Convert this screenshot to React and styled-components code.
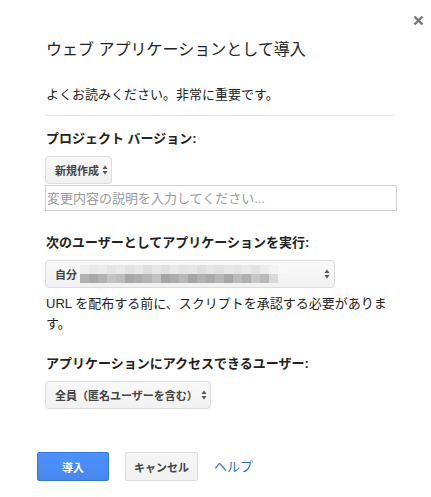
import React from "react";
import styled, { createGlobalStyle } from "styled-components";

const GlobalStyle = createGlobalStyle`
  body {
    margin: 0;
    background: #fff;
    font-family: "Liberation Sans", "Noto Sans CJK JP", sans-serif;
    color: #222;
  }
`;

const Dialog = styled.div`
  position: relative;
  width: 431px;
  height: 497px;
  box-sizing: border-box;
  padding: 40px 34px 0 45px;
  display: flex;
  flex-direction: column;
`;

const Close = styled.button`
  position: absolute;
  top: 14px;
  right: 7px;
  width: 12px;
  height: 12px;
  padding: 0;
  border: 0;
  background: none;
  display: flex;
  align-items: center;
  justify-content: center;
  cursor: pointer;
`;

const Title = styled.h1`
  margin: 0 0 0 1px;
  font-size: 16px;
  line-height: 20px;
  font-weight: normal;
  color: #222;
`;

const Text = styled.p`
  margin: ${(p) => p.$margin || "0"};
  margin-left: 1px;
  font-size: 13px;
  line-height: ${(p) => p.$lh || "18px"};
  color: #222;
  width: ${(p) => p.$width || "auto"};
`;

const Divider = styled.hr`
  margin: 11px 3px 0 0;
  border: 0;
  border-top: 1px solid #e5e5e5;
  height: 0;
`;

const Label = styled.div`
  margin: ${(p) => p.$top} 0 8px 1px;
  font-size: 13px;
  line-height: 18px;
  font-weight: bold;
  color: #222;
`;

const Select = styled.div`
  box-sizing: border-box;
  width: ${(p) => p.$width};
  height: 28px;
  border: 1px solid #dcdcdc;
  border-radius: 4px;
  background: linear-gradient(#f8f8f8, #f1f1f1);
  display: flex;
  align-items: center;
  padding: 0 4px 0 9px;
  font-size: 11px;
  font-weight: bold;
  color: #444;
  white-space: nowrap;
  gap: 3px;

  & > span,
  & > svg {
    flex-shrink: 0;
  }
`;

const Grow = styled.div`
  flex: 1;
  display: flex;
  align-items: center;
`;

const Input = styled.input`
  box-sizing: border-box;
  width: 352px;
  height: 26px;
  margin-top: 1px;
  border: 1px solid #d0d0d0;
  padding: 0 1px;
  font-family: inherit;
  font-size: 13px;
  color: #222;
  outline: none;

  &::placeholder {
    color: #9a9a9a;
  }
`;

const Blur = styled.div`
  display: grid;
  grid-template-columns: repeat(${(p) => p.$cols}, 9px);
  grid-template-rows: 9px 9px;
  margin-left: 3px;
`;

const Cell = styled.span`
  background: ${(p) => p.$shade};
`;

const Buttons = styled.div`
  margin: 43px 0 0 -8px;
  display: flex;
  align-items: center;
  gap: 16px;
`;

const Button = styled.button`
  box-sizing: border-box;
  height: 29px;
  width: ${(p) => p.$width};
  border-radius: 2px;
  border: 1px solid ${(p) => (p.$primary ? "#3079ed" : "#dcdcdc")};
  background: ${(p) =>
    p.$primary
      ? "linear-gradient(#4d90fe, #4787ed)"
      : "linear-gradient(#f5f5f5, #f1f1f1)"};
  color: ${(p) => (p.$primary ? "#fff" : "#444")};
  font-family: inherit;
  font-size: 11px;
  font-weight: bold;
  padding: 0;
`;

const Link = styled.a`
  font-size: 13px;
  color: #3367d6;
  text-decoration: none;
  margin-top: -2px;
`;

const Arrows = () => (
  <svg width="6" height="10" viewBox="0 0 6 10">
    <path d="M3 0.5 L5.5 4 H0.5 Z" fill="#555" />
    <path d="M3 9.5 L5.5 6 H0.5 Z" fill="#555" />
  </svg>
);

const topRow = [
  "#eee", "#e8e8e8", "#ececec", "#e4e4e4", "#e9e9e9", "#e2e2e2", "#e7e7e7",
  "#dedede", "#e6e6e6", "#e0e0e0", "#e8e8e8", "#e3e3e3", "#e6e6e6", "#dfdfdf",
  "#e5e5e5", "#e1e1e1", "#e7e7e7", "#e4e4e4", "#e9e9e9", "#e2e2e2", "#ececec",
  "#f3f3f3", "#f8f8f8",
];
const bottomRow = [
  "#b0b0b0", "#a9a9a9", "#b3b3b3", "#c4c4c4", "#bdbdbd", "#a8a8a8", "#aeaeae",
  "#b5b5b5", "#c2c2c2", "#a6a6a6", "#acacac", "#b8b8b8", "#a4a4a4", "#b1b1b1",
  "#aaaaaa", "#b6b6b6", "#a7a7a7", "#bbbbbb", "#b0b0b0", "#c6c6c6", "#b9b9b9",
  "#d9d9d9", "#f2f2f2",
];

const App = () => {
  return (
    <Dialog>
      <GlobalStyle />
      <Close aria-label="閉じる">
        <svg width="11" height="11" viewBox="0 0 11 11">
          <path
            d="M1.5 1.5 L9.5 9.5 M9.5 1.5 L1.5 9.5"
            stroke="#777"
            strokeWidth="2.4"
          />
        </svg>
      </Close>

      <Title>ウェブ アプリケーションとして導入</Title>
      <Text $margin="26px 0 0 0">よくお読みください。非常に重要です。</Text>
      <Divider />

      <Label $top="14px">プロジェクト バージョン:</Label>
      <Select $width="67px">
        <span>新規作成</span>
        <Arrows />
      </Select>
      <Input placeholder="変更内容の説明を入力してください..." />

      <Label $top="23px">次のユーザーとしてアプリケーションを実行:</Label>
      <Select $width="290px">
        <Grow>
          <span>自分</span>
          <Blur $cols={topRow.length}>
            {topRow.map((c, i) => (
              <Cell key={"t" + i} $shade={c} />
            ))}
            {bottomRow.map((c, i) => (
              <Cell key={"b" + i} $shade={c} />
            ))}
          </Blur>
        </Grow>
        <Arrows />
      </Select>
      <Text $margin="6px 0 0 0" $lh="20px" $width="346px">
        URL を配布する前に、スクリプトを承認する必要があります。
      </Text>

      <Label $top="21px">アプリケーションにアクセスできるユーザー:</Label>
      <Select $width="166px">
        <span>全員（匿名ユーザーを含む）</span>
        <Arrows />
      </Select>

      <Buttons>
        <Button $primary $width="72px">導入</Button>
        <Button $width="73px">キャンセル</Button>
        <Link href="#">ヘルプ</Link>
      </Buttons>
    </Dialog>
  );
};

export default App;
